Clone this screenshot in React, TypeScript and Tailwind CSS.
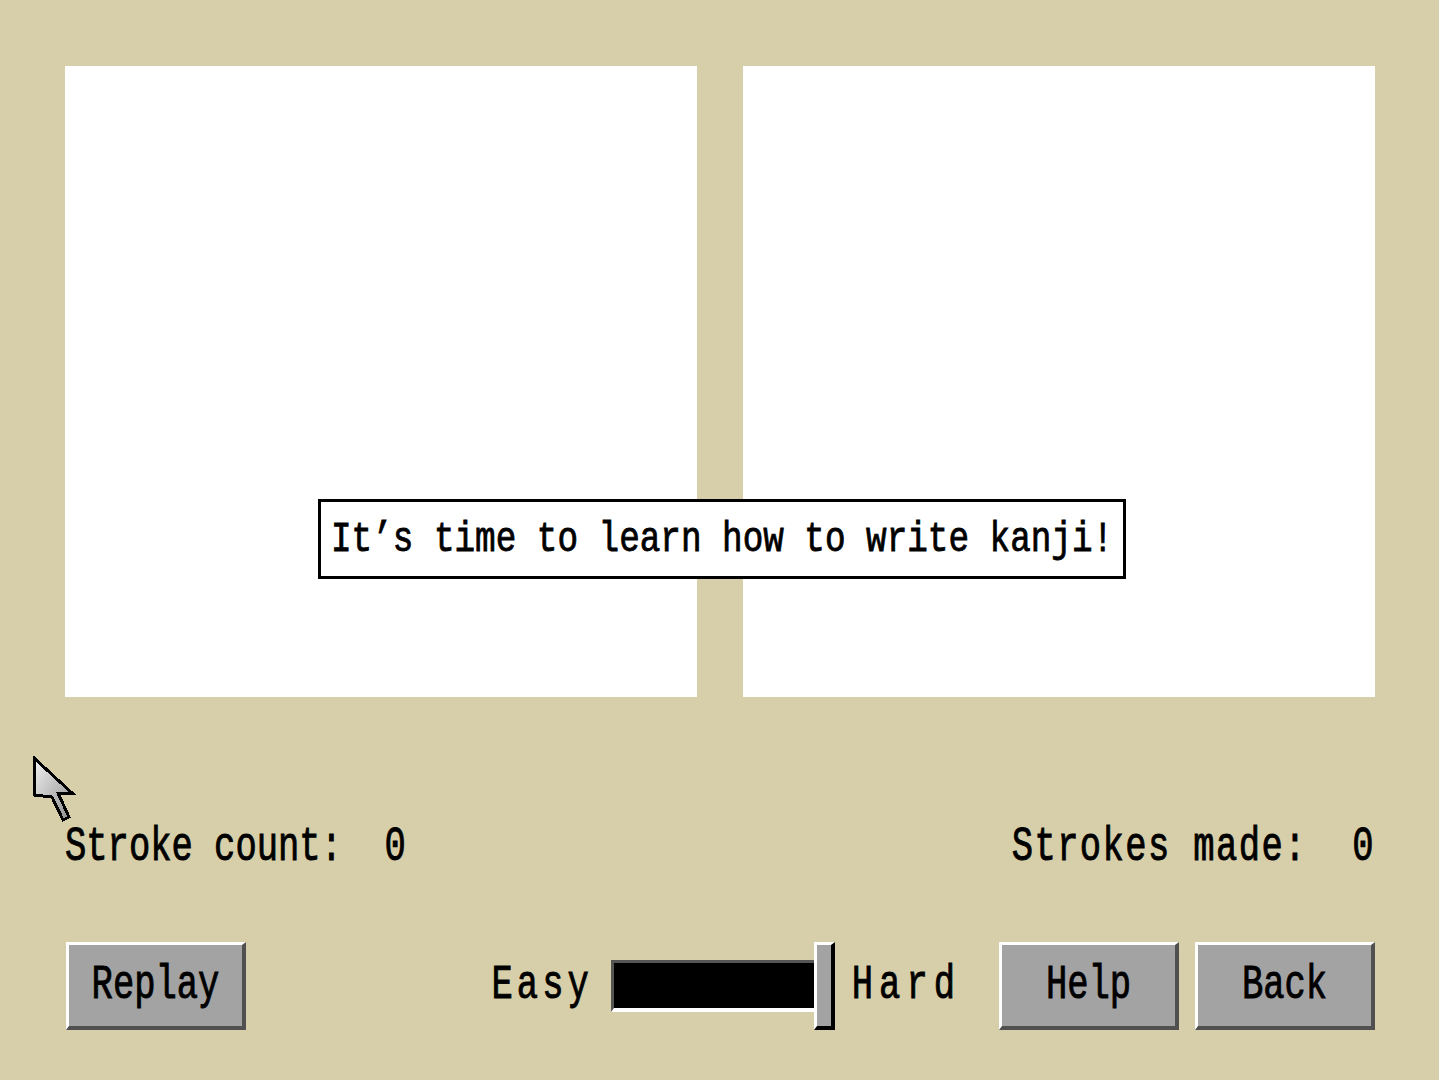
import React from "react"

const mono = { fontFamily: '"Liberation Mono", "DejaVu Sans Mono", monospace' }

function Label({ children, className = "" }: { children: React.ReactNode; className?: string }) {
  return (
    <span
      style={mono}
      className={`inline-block origin-center whitespace-pre leading-none text-black [-webkit-text-stroke:0.7px_black] ${className || "text-[35.5px] scale-y-[1.35]"}`}
    >
      {children}
    </span>
  )
}

function RetroButton({ label }: { label: string }) {
  return (
    <button
      type="button"
      className="flex h-[88px] w-[180px] items-center justify-center border-t-[3px] border-l-[3px] border-r-[4px] border-b-[4px] border-t-white border-l-white border-r-[#505050] border-b-[#505050] bg-[#a3a3a3]"
    >
      <Label>{label}</Label>
    </button>
  )
}

function Cursor() {
  return (
    <svg className="absolute left-[31px] top-[755px]" width="46" height="70" viewBox="0 0 46 70">
      <defs>
        <linearGradient id="cur" x1="0" y1="0" x2="1" y2="1">
          <stop offset="0" stopColor="#f2f2f2" />
          <stop offset="1" stopColor="#8c8c8c" />
        </linearGradient>
      </defs>
      <polygon
        points="3,3 41,38 27,38 38,62 32,65 21,42 3,40"
        fill="url(#cur)"
        stroke="#000"
        strokeWidth="3"
        strokeLinejoin="miter"
        shapeRendering="crispEdges"
      />
    </svg>
  )
}

export default function App() {
  return (
    <div className="relative h-[1080px] w-[1439px] overflow-hidden bg-[#d7cfa9]">
      <div className="flex flex-col pl-[65px] pr-[64px] pt-[66px]">
        {/* drawing panels */}
        <div className="flex gap-[46px]">
          <div className="h-[631px] w-[632px] bg-white" />
          <div className="h-[631px] w-[632px] bg-white" />
        </div>

        {/* counters */}
        <div className="mt-[131px] flex h-[40px] items-center justify-between">
          <Label>Stroke count:  0</Label>
          <Label className="text-[35.5px] scale-y-[1.35] tracking-[1.4px]">Strokes made:  0</Label>
        </div>

        {/* controls */}
        <div className="mt-[74px] flex items-center justify-between">
          <div className="pl-px">
            <RetroButton label="Replay" />
          </div>
          <div className="flex items-center">
            <Label className="text-[35.5px] scale-y-[1.35] tracking-[4px]">Easy</Label>
            <div className="ml-[18px] flex items-center">
              <div className="h-[52px] w-[203px] border-t-[3px] border-l-[3px] border-b-[4px] border-t-[#555] border-l-[#555] border-b-white bg-black" />
              <div className="h-[88px] w-[21px] border-t-[3px] border-l-[3px] border-r-[4px] border-b-[4px] border-t-white border-l-white border-r-black border-b-black bg-[#a3a3a3]" />
            </div>
            <Label className="ml-[17px] text-[35.5px] scale-y-[1.35] tracking-[6px]">Hard</Label>
            <div className="ml-[38px] flex gap-[16px]">
              <RetroButton label="Help" />
              <RetroButton label="Back" />
            </div>
          </div>
        </div>
      </div>

      {/* message box */}
      <div className="absolute left-[318px] top-[499px] flex h-[80px] w-[808px] items-center border-[3px] border-black bg-white pl-[10px] pt-[2px]">
        <Label className="text-[34.3px] scale-y-[1.25]">It’s time to learn how to write kanji!</Label>
      </div>

      <Cursor />
    </div>
  )
}
